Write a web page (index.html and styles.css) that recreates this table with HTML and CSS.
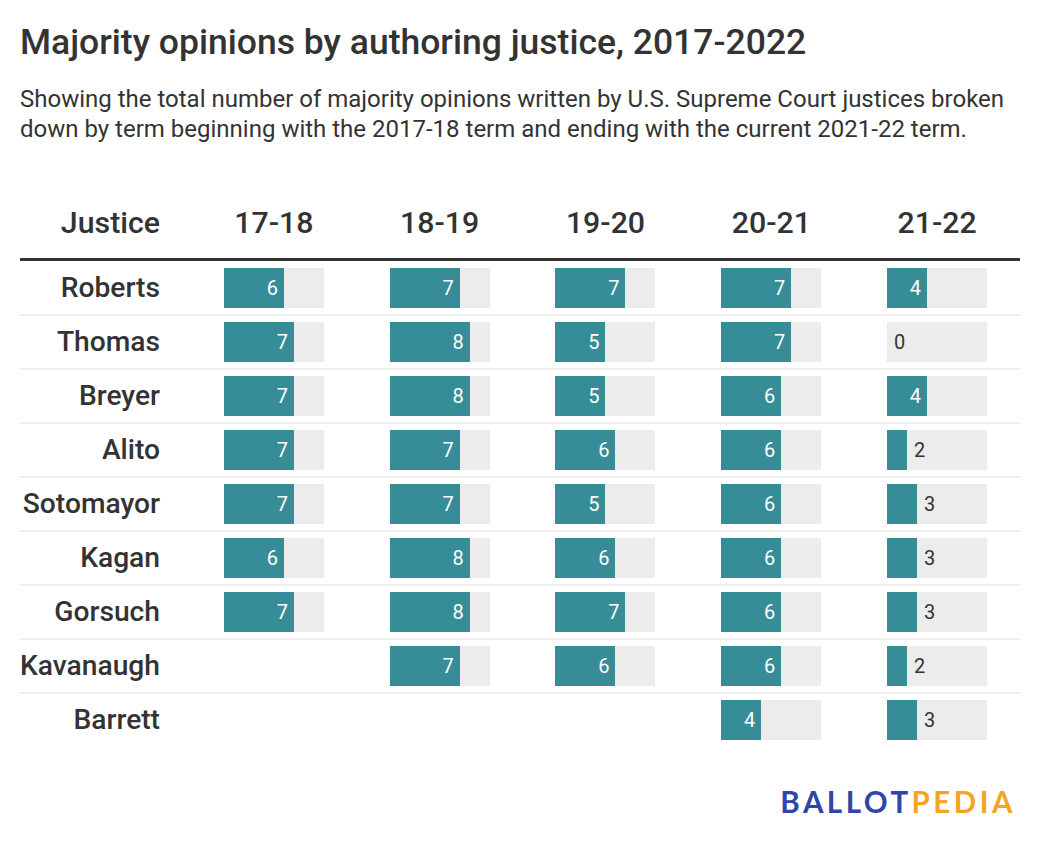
FILE: index.html
```html
<!DOCTYPE html>
<html lang="en">
<head>
<meta charset="utf-8">
<title>Majority opinions by authoring justice, 2017-2022</title>
<link rel="stylesheet" href="styles.css">
</head>
<body>
<main class="chart">
  <h1 class="title">Majority opinions by authoring justice, 2017-2022</h1>
  <p class="subtitle">Showing the total number of majority opinions written by U.S. Supreme Court justices broken down by term beginning with the 2017-18 term and ending with the current 2021-22 term.</p>

  <div class="table">
    <div class="row head">
      <div class="name">Justice</div>
      <div class="term">17-18</div>
      <div class="term">18-19</div>
      <div class="term">19-20</div>
      <div class="term">20-21</div>
      <div class="term">21-22</div>
    </div>

    <div class="row">
      <div class="name">Roberts</div>
      <div class="cell"><div class="track"><div class="fill" style="width:60px"><span class="in">6</span></div></div></div>
      <div class="cell"><div class="track"><div class="fill" style="width:70px"><span class="in">7</span></div></div></div>
      <div class="cell"><div class="track"><div class="fill" style="width:70px"><span class="in">7</span></div></div></div>
      <div class="cell"><div class="track"><div class="fill" style="width:70px"><span class="in">7</span></div></div></div>
      <div class="cell"><div class="track"><div class="fill" style="width:40px"><span class="in">4</span></div></div></div>
    </div>

    <div class="row">
      <div class="name">Thomas</div>
      <div class="cell"><div class="track"><div class="fill" style="width:70px"><span class="in">7</span></div></div></div>
      <div class="cell"><div class="track"><div class="fill" style="width:80px"><span class="in">8</span></div></div></div>
      <div class="cell"><div class="track"><div class="fill" style="width:50px"><span class="in">5</span></div></div></div>
      <div class="cell"><div class="track"><div class="fill" style="width:70px"><span class="in">7</span></div></div></div>
      <div class="cell"><div class="track"><div class="fill" style="width:0px"></div><span class="out">0</span></div></div>
    </div>

    <div class="row">
      <div class="name">Breyer</div>
      <div class="cell"><div class="track"><div class="fill" style="width:70px"><span class="in">7</span></div></div></div>
      <div class="cell"><div class="track"><div class="fill" style="width:80px"><span class="in">8</span></div></div></div>
      <div class="cell"><div class="track"><div class="fill" style="width:50px"><span class="in">5</span></div></div></div>
      <div class="cell"><div class="track"><div class="fill" style="width:60px"><span class="in">6</span></div></div></div>
      <div class="cell"><div class="track"><div class="fill" style="width:40px"><span class="in">4</span></div></div></div>
    </div>

    <div class="row">
      <div class="name">Alito</div>
      <div class="cell"><div class="track"><div class="fill" style="width:70px"><span class="in">7</span></div></div></div>
      <div class="cell"><div class="track"><div class="fill" style="width:70px"><span class="in">7</span></div></div></div>
      <div class="cell"><div class="track"><div class="fill" style="width:60px"><span class="in">6</span></div></div></div>
      <div class="cell"><div class="track"><div class="fill" style="width:60px"><span class="in">6</span></div></div></div>
      <div class="cell"><div class="track"><div class="fill" style="width:20px"></div><span class="out">2</span></div></div>
    </div>

    <div class="row">
      <div class="name">Sotomayor</div>
      <div class="cell"><div class="track"><div class="fill" style="width:70px"><span class="in">7</span></div></div></div>
      <div class="cell"><div class="track"><div class="fill" style="width:70px"><span class="in">7</span></div></div></div>
      <div class="cell"><div class="track"><div class="fill" style="width:50px"><span class="in">5</span></div></div></div>
      <div class="cell"><div class="track"><div class="fill" style="width:60px"><span class="in">6</span></div></div></div>
      <div class="cell"><div class="track"><div class="fill" style="width:30px"></div><span class="out">3</span></div></div>
    </div>

    <div class="row">
      <div class="name">Kagan</div>
      <div class="cell"><div class="track"><div class="fill" style="width:60px"><span class="in">6</span></div></div></div>
      <div class="cell"><div class="track"><div class="fill" style="width:80px"><span class="in">8</span></div></div></div>
      <div class="cell"><div class="track"><div class="fill" style="width:60px"><span class="in">6</span></div></div></div>
      <div class="cell"><div class="track"><div class="fill" style="width:60px"><span class="in">6</span></div></div></div>
      <div class="cell"><div class="track"><div class="fill" style="width:30px"></div><span class="out">3</span></div></div>
    </div>

    <div class="row">
      <div class="name">Gorsuch</div>
      <div class="cell"><div class="track"><div class="fill" style="width:70px"><span class="in">7</span></div></div></div>
      <div class="cell"><div class="track"><div class="fill" style="width:80px"><span class="in">8</span></div></div></div>
      <div class="cell"><div class="track"><div class="fill" style="width:70px"><span class="in">7</span></div></div></div>
      <div class="cell"><div class="track"><div class="fill" style="width:60px"><span class="in">6</span></div></div></div>
      <div class="cell"><div class="track"><div class="fill" style="width:30px"></div><span class="out">3</span></div></div>
    </div>

    <div class="row">
      <div class="name">Kavanaugh</div>
      <div class="cell"></div>
      <div class="cell"><div class="track"><div class="fill" style="width:70px"><span class="in">7</span></div></div></div>
      <div class="cell"><div class="track"><div class="fill" style="width:60px"><span class="in">6</span></div></div></div>
      <div class="cell"><div class="track"><div class="fill" style="width:60px"><span class="in">6</span></div></div></div>
      <div class="cell"><div class="track"><div class="fill" style="width:20px"></div><span class="out">2</span></div></div>
    </div>

    <div class="row last">
      <div class="name">Barrett</div>
      <div class="cell"></div>
      <div class="cell"></div>
      <div class="cell"></div>
      <div class="cell"><div class="track"><div class="fill" style="width:40px"><span class="in">4</span></div></div></div>
      <div class="cell"><div class="track"><div class="fill" style="width:30px"></div><span class="out">3</span></div></div>
    </div>
  </div>

  <footer class="footer">
    <div class="logo"><span class="logo-a">BALLOT</span><span class="logo-b">PEDIA</span></div>
  </footer>
</main>
</body>
</html>
```

FILE: styles.css
```css
html, body {
  margin: 0;
  padding: 0;
  background: #ffffff;
}

body {
  font-family: Roboto, "Liberation Sans", Arial, sans-serif;
  color: #333333;
}

.chart {
  padding: 20px 20px 0 20px;
  width: 1000px;
}

.title {
  margin: 0;
  font-size: 35.5px;
  font-weight: 500;
  line-height: 44px;
  color: #333333;
}

.subtitle {
  margin: 20px 0 0 0;
  font-size: 24px;
  line-height: 30px;
  font-weight: 400;
  color: #333333;
}

.table {
  margin-top: 61px;
  width: 1000px;
}

.row {
  display: grid;
  grid-template-columns: 171px repeat(5, 1fr);
  align-items: center;
  padding: 6px 0;
  border-bottom: 2px solid #eeeeee;
}

.row.last {
  border-bottom: none;
}

.row.head {
  padding: 0 0 17px 0;
  border-bottom: 3px solid #333333;
  margin-bottom: 1px;
}

.head .name,
.head .term {
  font-size: 30.3px;
  font-weight: 500;
  line-height: 36px;
}

.head .term {
  text-align: center;
}

.name {
  text-align: right;
  padding-right: 31px;
  font-size: 28.2px;
  font-weight: 500;
  line-height: 40px;
  white-space: nowrap;
}

.cell {
  display: flex;
  justify-content: center;
  height: 40px;
}

.track {
  width: 100px;
  height: 40px;
  background: #ececec;
  display: flex;
  align-items: center;
}

.fill {
  height: 40px;
  background: #368d97;
  display: flex;
  align-items: center;
  justify-content: flex-end;
  flex: none;
}

.in {
  color: #ffffff;
  font-size: 20px;
  padding-right: 6px;
}

.out {
  color: #333333;
  font-size: 20px;
  padding-left: 7px;
}

.footer {
  display: flex;
  justify-content: flex-end;
  margin-top: 38px;
  padding-right: 4px;
}

.logo {
  font-family: Lato, "Open Sans", sans-serif;
  font-weight: 700;
  font-size: 29.5px;
  line-height: normal;
  letter-spacing: 3.5px;
}

.logo-a {
  color: #2f46a9;
}

.logo-b {
  color: #f5a425;
}
```
